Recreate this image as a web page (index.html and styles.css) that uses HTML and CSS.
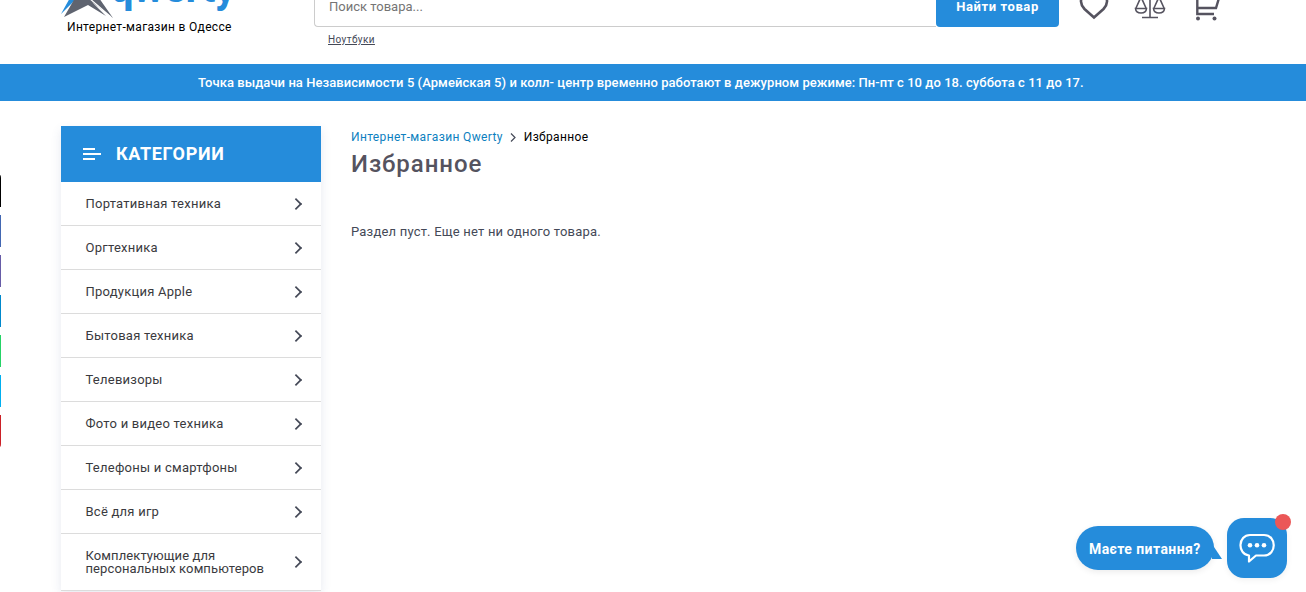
FILE: index.html
```html
<!DOCTYPE html>
<html lang="ru">
<head>
  <meta charset="UTF-8">
  <meta name="viewport" content="width=device-width, initial-scale=1.0">
  <title>Избранное</title>
  <link rel="stylesheet" href="styles.css">
</head>
<body>
  <header class="header">
    <a class="logo" href="#">
      <span class="logo-row">
        <svg class="logo-star" width="52" height="60" viewBox="0 0 52 60">
          <path d="M0 54 L10 36 L26 0 L18 36 Z" fill="#258cdb"/>
          <path d="M3 57 L14 38 L26 4 L38 38 L52 58 L31 42 L45 56 L27 45 Z" fill="#5f6470"/>
          <path d="M28 38 L50 57" stroke="#fff" stroke-width="1.200"/>
        </svg>
        <span class="logo-name">qwerty</span>
      </span>
      <span class="logo-text">Интернет-магазин в Одессе</span>
    </a>
    <div class="search">
      <form class="search-form">
        <input type="text" placeholder="Поиск товара...">
        <button type="button">Найти товар</button>
      </form>
      <a class="search-hint" href="#">Ноутбуки</a>
    </div>
    <nav class="header-icons">
      <svg width="32" height="30" viewBox="0 0 32 30"><path d="M16 26.500 L6.500 18 C-3 8 9 -3 16 6 C23 -3 35 8 25.500 18 Z" fill="none" stroke="#55535f" stroke-width="2.600"/></svg>
      <svg width="32" height="30" viewBox="0 0 32 30" fill="none" stroke="#55535f" stroke-width="1.600"><path d="M16 2 V26 M8 26.500 H24 M4 5 H28 M7 6 L2 17 M7 6 L12 17 M25 6 L20 17 M25 6 L30 17 M1.500 17.500 H12.500 C12 23.500 2 23.500 1.500 17.500 Z M19.500 17.500 H30.500 C30 23.500 20 23.500 19.500 17.500 Z"/></svg>
      <svg width="32" height="30" viewBox="0 0 32 30" fill="none" stroke="#55535f" stroke-width="2.400"><path d="M3 3 H7.300 V23 H24 M7 17 H26 L29 7 H7"/><circle cx="8" cy="27.600" r="2" fill="#55535f" stroke="none"/><circle cx="24.500" cy="27.600" r="2" fill="#55535f" stroke="none"/></svg>
    </nav>
  </header>

  <div class="notice">Точка выдачи на Независимости 5 (Армейская 5) и колл- центр временно работают в дежурном режиме: Пн-пт с 10 до 18. суббота с 11 до 17.</div>

  <div class="page">
    <aside class="catalog">
      <div class="catalog-title">
        <svg width="18" height="12" viewBox="0 0 18 12"><path d="M0 1 H12 M0 6 H18 M0 11 H12" stroke="#fff" stroke-width="1.800"/></svg>
        <span>КАТЕГОРИИ</span>
      </div>
      <ul class="catalog-list">
        <li><span>Портативная техника</span></li>
        <li><span>Оргтехника</span></li>
        <li><span>Продукция Apple</span></li>
        <li><span>Бытовая техника</span></li>
        <li><span>Телевизоры</span></li>
        <li><span>Фото и видео техника</span></li>
        <li><span>Телефоны и смартфоны</span></li>
        <li><span>Всё для игр</span></li>
        <li class="tall"><span>Комплектующие для<br>персональных компьютеров</span></li>
      </ul>
    </aside>
    <main class="content">
      <div class="breadcrumbs">
        <a href="#">Интернет-магазин Qwerty</a>
        <svg width="6" height="9" viewBox="0 0 6 9"><path d="M1 0.500 L5 4.500 L1 8.500" fill="none" stroke="#444957" stroke-width="1.200"/></svg>
        <span class="current">Избранное</span>
      </div>
      <h1>Избранное</h1>
      <p class="empty">Раздел пуст. Еще нет ни одного товара.</p>
    </main>
  </div>

  <div class="share">
    <i class="tiktok"></i>
    <i class="facebook"></i>
    <i class="viber"></i>
    <i class="telegram"></i>
    <i class="whatsapp"></i>
    <i class="skype"></i>
    <i class="pinterest"></i>
  </div>

  <div class="chat">
    <div class="chat-label">
      <span>Маєте питання?</span>
      <svg class="chat-tail" width="10" height="20" viewBox="0 0 10 20"><path d="M0 0 L10 15 H0 Z" fill="#258cdb"/></svg>
    </div>
    <div class="chat-button">
      <svg width="36" height="30" viewBox="0 0 36 30"><path d="M11 2 H25 C38 2 38 22.500 25 22.500 H17 L10 28.500 V22.500 C-2 21 -1 2 11 2 Z" fill="none" stroke="#fff" stroke-width="2.200" stroke-linejoin="round"/><circle cx="11" cy="12.300" r="2.300" fill="#fff"/><circle cx="18" cy="12.300" r="2.300" fill="#fff"/><circle cx="25" cy="12.300" r="2.300" fill="#fff"/></svg>
      <span class="chat-dot"></span>
    </div>
  </div>

</body>
</html>
```

FILE: styles.css
```css
* {
  box-sizing: border-box;
}
body {
  margin: 0;
  height: 592px;
  overflow: hidden;
  font-family: Roboto, "Noto Sans", sans-serif;
  font-size: 13px;
  color: #444957;
  background: #fff;
}
a {
  color: inherit;
}

/* header is scrolled under the top edge */
.header {
  display: flex;
  height: 104px;
  margin-top: -40px;
  padding-left: 61px;
}
.logo {
  width: 253px;
  text-decoration: none;
}
.logo-row {
  display: flex;
  height: 58px;
}
.logo-star {
  flex: none;
}
.logo-name {
  margin-top: 5px;
  margin-left: -3px;
  font-size: 42px;
  line-height: 46px;
  font-weight: 700;
  letter-spacing: -0.6px;
  color: #258cdb;
}
.logo-text {
  display: block;
  padding-left: 6px;
  font-size: 12px;
  line-height: 18px;
  letter-spacing: 0.32px;
  color: #000;
}
.search {
  width: 745px;
}
.search-form {
  display: flex;
  height: 41px;
  margin-top: 26px;
}
.search-form input {
  flex: 1;
  padding: 0 14px;
  border: 1px solid #ccc;
  border-right: none;
  border-radius: 4px 0 0 4px;
  font: 13px Roboto, sans-serif;
  color: #757575;
}
.search-form button {
  width: 123px;
  padding: 0;
  border: none;
  border-radius: 4px;
  background: #258cdb;
  color: #fff;
  font: 700 13px Roboto, sans-serif;
  letter-spacing: 0.6px;
}
.search-hint {
  display: block;
  margin: 7px 0 0 14px;
  font-size: 10px;
  line-height: 12px;
  letter-spacing: 0.4px;
}
.header-icons {
  display: flex;
  gap: 24px;
  margin: 31px 0 0 19px;
}

.notice {
  height: 37px;
  padding-left: 198px;
  background: #258cdb;
  color: #fff;
  font-weight: 500;
  line-height: 37px;
  letter-spacing: 0.055px;
  white-space: nowrap;
}

.page {
  display: flex;
  gap: 30px;
  padding: 25px 0 0 61px;
}
.catalog {
  width: 260px;
  box-shadow: 0 4px 10px rgba(60, 80, 140, 0.12);
}
.catalog-title {
  display: flex;
  align-items: center;
  gap: 15px;
  height: 56px;
  padding-left: 22px;
  background: #258cdb;
  color: #fff;
  font-size: 18px;
  font-weight: 700;
  letter-spacing: 0.65px;
}
.catalog-title span {
  padding-bottom: 2px;
}
.catalog-list {
  margin: 0;
  padding: 0;
  list-style: none;
}
.catalog-list li {
  display: flex;
  align-items: center;
  justify-content: space-between;
  height: 44px;
  padding: 0 20px 0 24.5px;
  border-bottom: 1px solid #dcdcdc;
  color: #3a3a3e;
  line-height: 13px;
  letter-spacing: 0.24px;
}
.catalog-list li.tall {
  height: 57px;
}
.catalog-list li.tall span {
  letter-spacing: 0.1px;
}
.catalog-list li::after {
  content: "";
  width: 8px;
  height: 8px;
  border: solid #444957;
  border-width: 2px 2px 0 0;
  transform: rotate(45deg) scale(0.85);
}

.content {
  flex: 1;
}
.breadcrumbs {
  display: flex;
  align-items: center;
  gap: 8px;
  height: 22px;
  font-size: 12px;
  letter-spacing: 0.35px;
}
.breadcrumbs a {
  color: #0d7fc0;
  text-decoration: none;
}
.breadcrumbs svg {
  margin-left: -1px;
}
.breadcrumbs .current {
  color: #000;
}
h1 {
  margin: 0;
  font-size: 24px;
  line-height: 32px;
  font-weight: 500;
  letter-spacing: 0.95px;
  color: #55535f;
}
.empty {
  margin: 43px 0 0;
  line-height: 18px;
  letter-spacing: 0.2px;
}

.share {
  position: absolute;
  left: 0;
  top: 175px;
  display: flex;
  flex-direction: column;
  gap: 8px;
}
.share i {
  width: 1px;
  height: 32px;
}
.tiktok { background: #000; border-top-right-radius: 1px 3px; }
.facebook { background: #4267b2; }
.viber { background: #665ca7; }
.telegram { background: #0088cc; }
.whatsapp { background: #25d366; }
.skype { background: #00aff0; }
.pinterest { background: #cb2027; border-bottom-right-radius: 1px 3px; }

.chat {
  position: absolute;
  right: 19px;
  bottom: 14px;
  display: flex;
  gap: 13px;
}
.chat-label {
  position: relative;
  width: 138px;
  height: 44px;
  margin-top: 8px;
  padding-left: 13px;
  border-radius: 22px;
  background: #258cdb;
  box-shadow: 0 2px 6px rgba(0, 0, 0, 0.08);
  color: #fff;
  font-size: 14px;
  line-height: 46px;
  font-weight: 700;
  letter-spacing: 0.42px;
  white-space: nowrap;
}
.chat-tail {
  position: absolute;
  right: -8px;
  top: 18px;
}
.chat-button {
  position: relative;
  display: flex;
  align-items: center;
  justify-content: center;
  width: 60px;
  height: 60px;
  border-radius: 17px;
  background: #258cdb;
  box-shadow: 0 2px 6px rgba(0, 0, 0, 0.06);
}
.chat-dot {
  position: absolute;
  top: -4px;
  right: -4px;
  width: 16px;
  height: 16px;
  border-radius: 50%;
  background: #eb5757;
}
```
